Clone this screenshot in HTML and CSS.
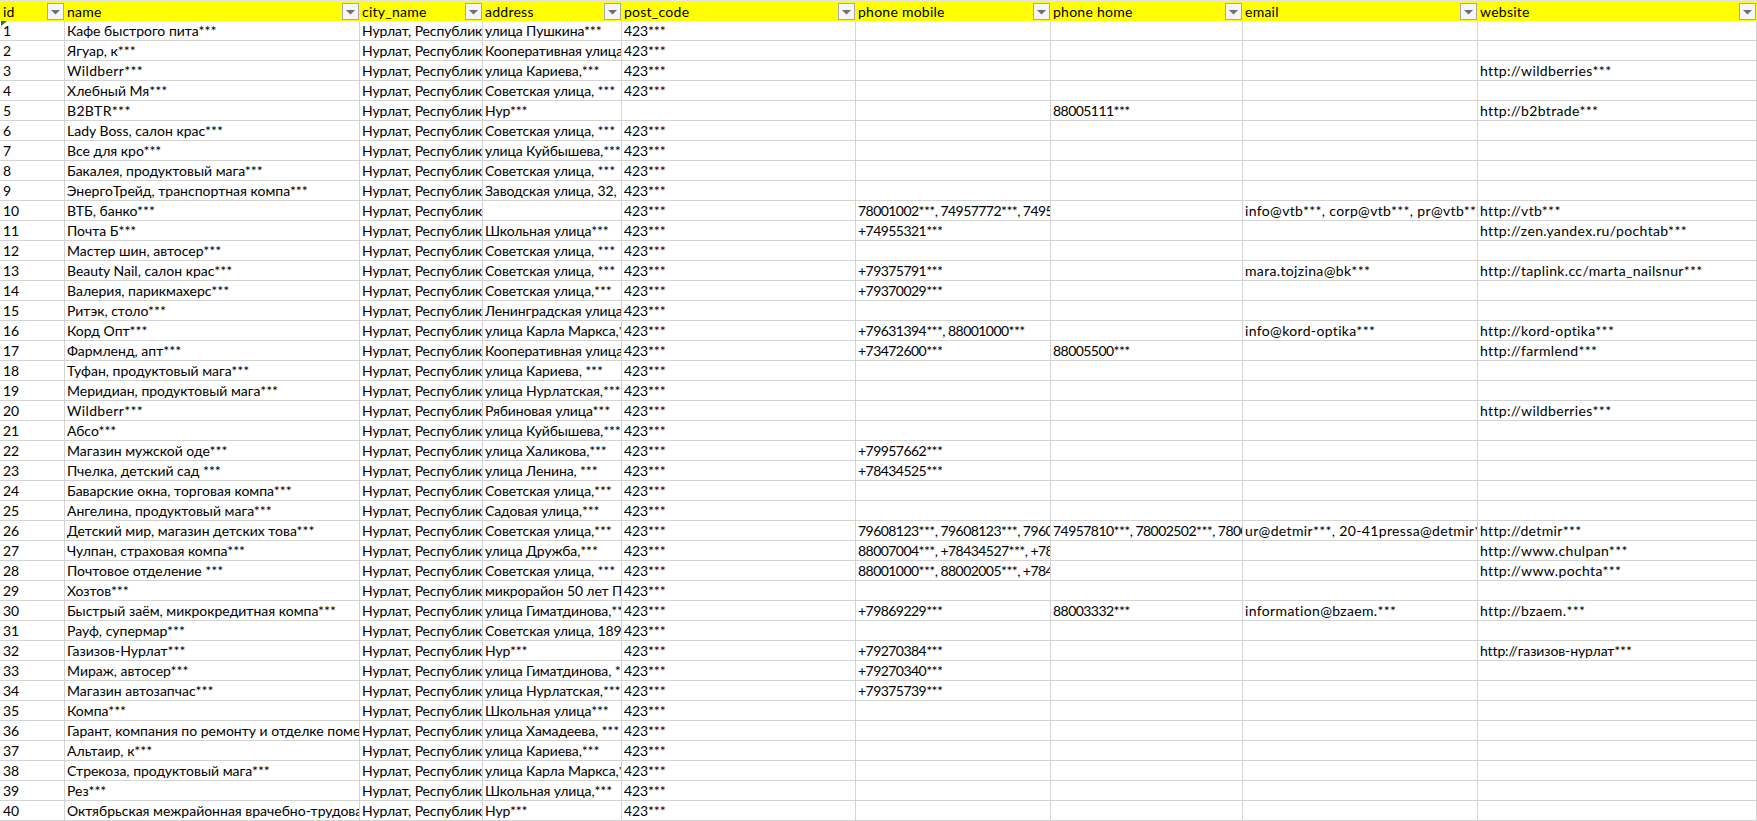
FILE: index.html
```html
<!DOCTYPE html>
<html lang="ru">
<head>
<meta charset="utf-8">
<title>Sheet</title>
<link rel="stylesheet" href="styles.css">
</head>
<body>
<svg class="defs" width="0" height="0" aria-hidden="true"><symbol id="filter" viewBox="0 0 17 17"><rect x="0.5" y="0.5" width="16" height="16" fill="#f4f6f9" stroke="#a3a8b4"/><path d="M4 7h9l-4.500 4.500z" fill="#6e6e74"/></symbol></svg>
<table class="sheet">
<colgroup><col class="c-id"><col class="c-name"><col class="c-city"><col class="c-addr"><col class="c-post"><col class="c-mob"><col class="c-home"><col class="c-mail"><col class="c-web"></colgroup>
<thead><tr>
<th><div class="hd"><span>id</span><svg class="fb"><use href="#filter"/></svg></div></th>
<th><div class="hd"><span>name</span><svg class="fb"><use href="#filter"/></svg></div></th>
<th><div class="hd"><span>city_name</span><svg class="fb"><use href="#filter"/></svg></div></th>
<th><div class="hd"><span>address</span><svg class="fb"><use href="#filter"/></svg></div></th>
<th><div class="hd"><span>post_code</span><svg class="fb"><use href="#filter"/></svg></div></th>
<th><div class="hd"><span>phone mobile</span><svg class="fb"><use href="#filter"/></svg></div></th>
<th><div class="hd"><span>phone home</span><svg class="fb"><use href="#filter"/></svg></div></th>
<th><div class="hd"><span>email</span><svg class="fb"><use href="#filter"/></svg></div></th>
<th><div class="hd"><span>website</span><svg class="fb"><use href="#filter"/></svg></div></th>
</tr></thead>
<tbody>
<tr><td class="first">1</td><td>Кафе быстрого пита***</td><td>Нурлат, Республика Татарстан***</td><td>улица Пушкина***</td><td>423***</td><td></td><td></td><td></td><td></td></tr>
<tr><td>2</td><td>Ягуар, к***</td><td>Нурлат, Республика Татарстан***</td><td>Кооперативная улица***</td><td>423***</td><td></td><td></td><td></td><td></td></tr>
<tr><td>3</td><td class="lat">Wildberr***</td><td>Нурлат, Республика Татарстан***</td><td>улица Кариева,***</td><td>423***</td><td></td><td></td><td></td><td class="lat">http://wildberries***</td></tr>
<tr><td>4</td><td>Хлебный Мя***</td><td>Нурлат, Республика Татарстан***</td><td>Советская улица, ***</td><td>423***</td><td></td><td></td><td></td><td></td></tr>
<tr><td>5</td><td class="lat">B2BTR***</td><td>Нурлат, Республика Татарстан***</td><td>Нур***</td><td></td><td></td><td class="num">88005111***</td><td></td><td class="lat">http://b2btrade***</td></tr>
<tr><td>6</td><td>Lady Boss, салон крас***</td><td>Нурлат, Республика Татарстан***</td><td>Советская улица, ***</td><td>423***</td><td></td><td></td><td></td><td></td></tr>
<tr><td>7</td><td>Все для кро***</td><td>Нурлат, Республика Татарстан***</td><td>улица Куйбышева,***</td><td>423***</td><td></td><td></td><td></td><td></td></tr>
<tr><td>8</td><td>Бакалея, продуктовый мага***</td><td>Нурлат, Республика Татарстан***</td><td>Советская улица, ***</td><td>423***</td><td></td><td></td><td></td><td></td></tr>
<tr><td>9</td><td>ЭнергоТрейд, транспортная компа***</td><td>Нурлат, Республика Татарстан***</td><td>Заводская улица, 32, 1***</td><td>423***</td><td></td><td></td><td></td><td></td></tr>
<tr><td>10</td><td>ВТБ, банко***</td><td>Нурлат, Республика Татарстан***</td><td></td><td>423***</td><td class="num">78001002***, 74957772***, 74957***</td><td></td><td class="lat">info@vtb***, corp@vtb***, pr@vtb***</td><td class="lat">http://vtb***</td></tr>
<tr><td>11</td><td>Почта Б***</td><td>Нурлат, Республика Татарстан***</td><td>Школьная улица***</td><td>423***</td><td class="num">+74955321***</td><td></td><td></td><td class="lat">http://zen.yandex.ru/pochtab***</td></tr>
<tr><td>12</td><td>Мастер шин, автосер***</td><td>Нурлат, Республика Татарстан***</td><td>Советская улица, ***</td><td>423***</td><td></td><td></td><td></td><td></td></tr>
<tr><td>13</td><td>Beauty Nail, салон крас***</td><td>Нурлат, Республика Татарстан***</td><td>Советская улица, ***</td><td>423***</td><td class="num">+79375791***</td><td></td><td class="lat">mara.tojzina@bk***</td><td class="lat">http://taplink.cc/marta_nailsnur***</td></tr>
<tr><td>14</td><td>Валерия, парикмахерс***</td><td>Нурлат, Республика Татарстан***</td><td>Советская улица,***</td><td>423***</td><td class="num">+79370029***</td><td></td><td></td><td></td></tr>
<tr><td>15</td><td>Ритэк, столо***</td><td>Нурлат, Республика Татарстан***</td><td>Ленинградская улица***</td><td>423***</td><td></td><td></td><td></td><td></td></tr>
<tr><td>16</td><td>Корд Опт***</td><td>Нурлат, Республика Татарстан***</td><td>улица Карла Маркса,***</td><td>423***</td><td class="num">+79631394***, 88001000***</td><td></td><td class="lat">info@kord-optika***</td><td class="lat">http://kord-optika***</td></tr>
<tr><td>17</td><td>Фармленд, апт***</td><td>Нурлат, Республика Татарстан***</td><td>Кооперативная улица***</td><td>423***</td><td class="num">+73472600***</td><td class="num">88005500***</td><td></td><td class="lat">http://farmlend***</td></tr>
<tr><td>18</td><td>Туфан, продуктовый мага***</td><td>Нурлат, Республика Татарстан***</td><td>улица Кариева, ***</td><td>423***</td><td></td><td></td><td></td><td></td></tr>
<tr><td>19</td><td>Меридиан, продуктовый мага***</td><td>Нурлат, Республика Татарстан***</td><td>улица Нурлатская,***</td><td>423***</td><td></td><td></td><td></td><td></td></tr>
<tr><td>20</td><td class="lat">Wildberr***</td><td>Нурлат, Республика Татарстан***</td><td>Рябиновая улица***</td><td>423***</td><td></td><td></td><td></td><td class="lat">http://wildberries***</td></tr>
<tr><td>21</td><td>Абсо***</td><td>Нурлат, Республика Татарстан***</td><td>улица Куйбышева,***</td><td>423***</td><td></td><td></td><td></td><td></td></tr>
<tr><td>22</td><td>Магазин мужской оде***</td><td>Нурлат, Республика Татарстан***</td><td>улица Халикова,***</td><td>423***</td><td class="num">+79957662***</td><td></td><td></td><td></td></tr>
<tr><td>23</td><td>Пчелка, детский сад ***</td><td>Нурлат, Республика Татарстан***</td><td>улица Ленина, ***</td><td>423***</td><td class="num">+78434525***</td><td></td><td></td><td></td></tr>
<tr><td>24</td><td>Баварские окна, торговая компа***</td><td>Нурлат, Республика Татарстан***</td><td>Советская улица,***</td><td>423***</td><td></td><td></td><td></td><td></td></tr>
<tr><td>25</td><td>Ангелина, продуктовый мага***</td><td>Нурлат, Республика Татарстан***</td><td>Садовая улица,***</td><td>423***</td><td></td><td></td><td></td><td></td></tr>
<tr><td>26</td><td>Детский мир, магазин детских това***</td><td>Нурлат, Республика Татарстан***</td><td>Советская улица,***</td><td>423***</td><td class="num">79608123***, 79608123***, 79608123***</td><td class="num">74957810***, 78002502***, 78002***</td><td class="lat">ur@detmir***, 20-41pressa@detmir***</td><td class="lat">http://detmir***</td></tr>
<tr><td>27</td><td>Чулпан, страховая компа***</td><td>Нурлат, Республика Татарстан***</td><td>улица Дружба,***</td><td>423***</td><td class="num">88007004***, +78434527***, +78434***</td><td></td><td></td><td class="lat">http://www.chulpan***</td></tr>
<tr><td>28</td><td>Почтовое отделение ***</td><td>Нурлат, Республика Татарстан***</td><td>Советская улица, ***</td><td>423***</td><td class="num">88001000***, 88002005***, +78434***</td><td></td><td></td><td class="lat">http://www.pochta***</td></tr>
<tr><td>29</td><td>Хозтов***</td><td>Нурлат, Республика Татарстан***</td><td>микрорайон 50 лет Победы***</td><td>423***</td><td></td><td></td><td></td><td></td></tr>
<tr><td>30</td><td>Быстрый заём, микрокредитная компа***</td><td>Нурлат, Республика Татарстан***</td><td>улица Гиматдинова,***</td><td>423***</td><td class="num">+79869229***</td><td class="num">88003332***</td><td class="lat">information@bzaem.***</td><td class="lat">http://bzaem.***</td></tr>
<tr><td>31</td><td>Рауф, супермар***</td><td>Нурлат, Республика Татарстан***</td><td>Советская улица, 189***</td><td>423***</td><td></td><td></td><td></td><td></td></tr>
<tr><td>32</td><td>Газизов-Нурлат***</td><td>Нурлат, Республика Татарстан***</td><td>Нур***</td><td>423***</td><td class="num">+79270384***</td><td></td><td></td><td>http://газизов-нурлат***</td></tr>
<tr><td>33</td><td>Мираж, автосер***</td><td>Нурлат, Республика Татарстан***</td><td>улица Гиматдинова, ***</td><td>423***</td><td class="num">+79270340***</td><td></td><td></td><td></td></tr>
<tr><td>34</td><td>Магазин автозапчас***</td><td>Нурлат, Республика Татарстан***</td><td>улица Нурлатская,***</td><td>423***</td><td class="num">+79375739***</td><td></td><td></td><td></td></tr>
<tr><td>35</td><td>Компа***</td><td>Нурлат, Республика Татарстан***</td><td>Школьная улица***</td><td>423***</td><td></td><td></td><td></td><td></td></tr>
<tr><td>36</td><td>Гарант, компания по ремонту и отделке помещений***</td><td>Нурлат, Республика Татарстан***</td><td>улица Хамадеева, ***</td><td>423***</td><td></td><td></td><td></td><td></td></tr>
<tr><td>37</td><td>Альтаир, к***</td><td>Нурлат, Республика Татарстан***</td><td>улица Кариева,***</td><td>423***</td><td></td><td></td><td></td><td></td></tr>
<tr><td>38</td><td>Стрекоза, продуктовый мага***</td><td>Нурлат, Республика Татарстан***</td><td>улица Карла Маркса,***</td><td>423***</td><td></td><td></td><td></td><td></td></tr>
<tr><td>39</td><td>Рез***</td><td>Нурлат, Республика Татарстан***</td><td>Школьная улица,***</td><td>423***</td><td></td><td></td><td></td><td></td></tr>
<tr><td>40</td><td>Октябрьская межрайонная врачебно-трудовая***</td><td>Нурлат, Республика Татарстан***</td><td>Нур***</td><td>423***</td><td></td><td></td><td></td><td></td></tr>
</tbody>
</table>
</body>
</html>
```

FILE: styles.css
```css
html, body {
  margin: 0;
  padding: 0;
  background: #fff;
  overflow: hidden;
}
.defs {
  display: block;
  height: 0;
}
.sheet {
  table-layout: fixed;
  width: 1757px;
  border-collapse: separate;
  border-spacing: 0;
  font-family: "Lato", "Noto Sans", sans-serif;
  font-size: 14px;
  color: #000;
}
.c-id { width: 65px; }
.c-name { width: 295px; }
.c-city { width: 123px; }
.c-addr { width: 139px; }
.c-post { width: 234px; }
.c-mob { width: 195px; }
.c-home { width: 192px; }
.c-mail { width: 235px; }
.c-web { width: 279px; }
th {
  height: 20px;
  padding: 0;
  background: #ffff00;
  border-top: 1px solid #e4e4e4;
  font-weight: 400;
  text-align: left;
  letter-spacing: 0.25px;
}
.hd {
  display: flex;
  align-items: center;
  justify-content: space-between;
  height: 20px;
  padding: 0 1px 0 2px;
}
th:first-child .hd {
  padding-left: 3px;
}
.fb {
  width: 17px;
  height: 17px;
  flex: none;
}
td {
  position: relative;
  height: 19px;
  padding: 0 0 0 2px;
  border-right: 1px solid #d4d4d4;
  border-bottom: 1px solid #d4d4d4;
  overflow: hidden;
  white-space: nowrap;
  line-height: 19px;
  letter-spacing: -0.12px;
}
td:first-child {
  padding-left: 3px;
}
td:nth-child(2) {
  letter-spacing: 0;
}
td.lat {
  letter-spacing: 0.35px;
}
td.num {
  letter-spacing: -0.55px;
}
.first::before {
  content: "";
  position: absolute;
  top: 0;
  left: 1px;
  border-top: 5px solid #177a17;
  border-right: 6px solid transparent;
}
```
